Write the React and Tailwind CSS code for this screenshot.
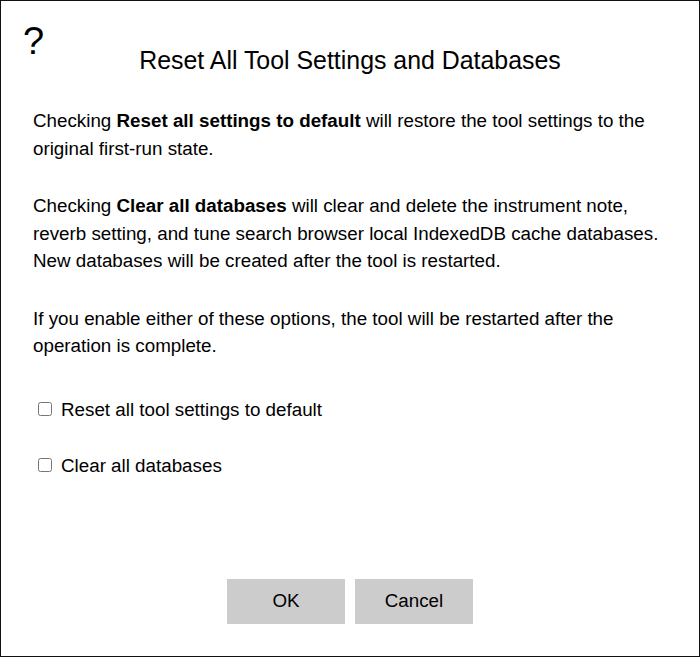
import React from "react";

const App = () => {
  return (
    <div className="relative flex h-[657px] w-[700px] flex-col border border-[#111] bg-white text-black font-['Liberation_Sans',Arial,sans-serif]">
      {/* help button */}
      <span className="absolute left-[22px] top-[18px] text-[38px] leading-[44px]">?</span>

      <h1 className="mt-[43px] text-center text-[24.9px] leading-[32px] font-normal">
        Reset All Tool Settings and Databases
      </h1>

      <div className="mt-[31px] px-[32px] text-[18.8px] leading-[27.5px]">
        <p className="mb-[30px]">
          Checking <b>Reset all settings to default</b> will restore the tool settings to the original
          first-run state.
        </p>
        <p className="mb-[30px]">
          Checking <b>Clear all databases</b> will clear and delete the instrument note, reverb setting,
          and tune search browser local IndexedDB cache databases. New databases will be created after
          the tool is restarted.
        </p>
        <p>
          If you enable either of these options, the tool will be restarted after the operation is
          complete.
        </p>
      </div>

      <div className="mt-[36px] flex flex-col gap-[28.5px] pl-[37px] text-[18.8px] leading-[27.5px]">
        <label className="flex items-center gap-[9px]">
          <input type="checkbox" className="m-0 h-[14px] w-[14px]" />
          <span>Reset all tool settings to default</span>
        </label>
        <label className="flex items-center gap-[9px]">
          <input type="checkbox" className="m-0 h-[14px] w-[14px]" />
          <span>Clear all databases</span>
        </label>
      </div>

      <div className="flex-1" />

      <div className="mb-[32px] flex justify-center gap-[10px]">
        <button className="h-[45px] w-[118px] bg-[#cccccc] text-[18.8px]">OK</button>
        <button className="h-[45px] w-[118px] bg-[#cccccc] text-[18.8px]">Cancel</button>
      </div>
    </div>
  );
};

export default App;
